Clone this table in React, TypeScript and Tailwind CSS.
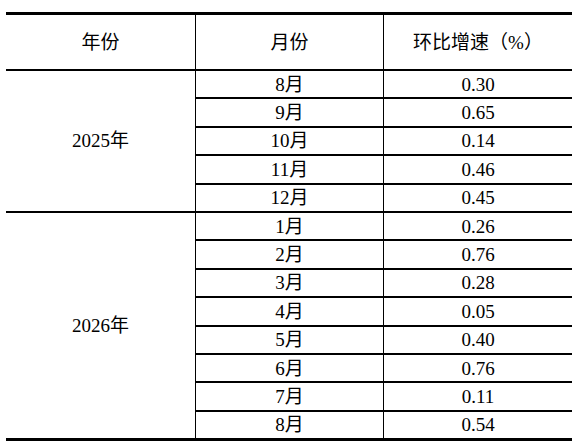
const groups = [
  {
    year: "2025年",
    rows: [
      ["8月", "0.30"],
      ["9月", "0.65"],
      ["10月", "0.14"],
      ["11月", "0.46"],
      ["12月", "0.45"],
    ],
  },
  {
    year: "2026年",
    rows: [
      ["1月", "0.26"],
      ["2月", "0.76"],
      ["3月", "0.28"],
      ["4月", "0.05"],
      ["5月", "0.40"],
      ["6月", "0.76"],
      ["7月", "0.11"],
      ["8月", "0.54"],
    ],
  },
];

export default function App() {
  return (
    <div
      className="min-h-[448px] w-[578px] bg-white pt-[12px] pl-[6px] text-black text-[19px] leading-none"
      style={{ fontFamily: '"Liberation Serif", "Noto Sans CJK SC", serif' }}
    >
      <div className="w-[566px] border-t-[3px] border-b-[3px] border-black">
        {/* Header */}
        <div className="flex h-[56px] border-b-2 border-black">
          <div className="w-[189px] flex items-center justify-center">年份</div>
          <div className="w-[188px] border-l border-black flex items-center justify-center">月份</div>
          <div className="flex-1 border-l border-black flex items-center justify-center">环比增速（%）</div>
        </div>

        {/* Body */}
        {groups.map((g, gi) => (
          <div
            key={g.year}
            className={`flex ${gi < groups.length - 1 ? "border-b-2 border-black" : ""}`}
          >
            <div className="w-[189px] flex items-center justify-center">{g.year}</div>
            <div className="flex-1 flex flex-col">
              {g.rows.map(([m, v], ri) => (
                <div
                  key={m + v}
                  className={`flex h-[26.4px] ${ri < g.rows.length - 1 ? "box-content border-b-2 border-black" : ""}`}
                >
                  <div className="w-[188px] border-l border-black flex items-center justify-center">{m}</div>
                  <div className="flex-1 border-l border-black flex items-center justify-center">{v}</div>
                </div>
              ))}
            </div>
          </div>
        ))}
      </div>
    </div>
  );
}
